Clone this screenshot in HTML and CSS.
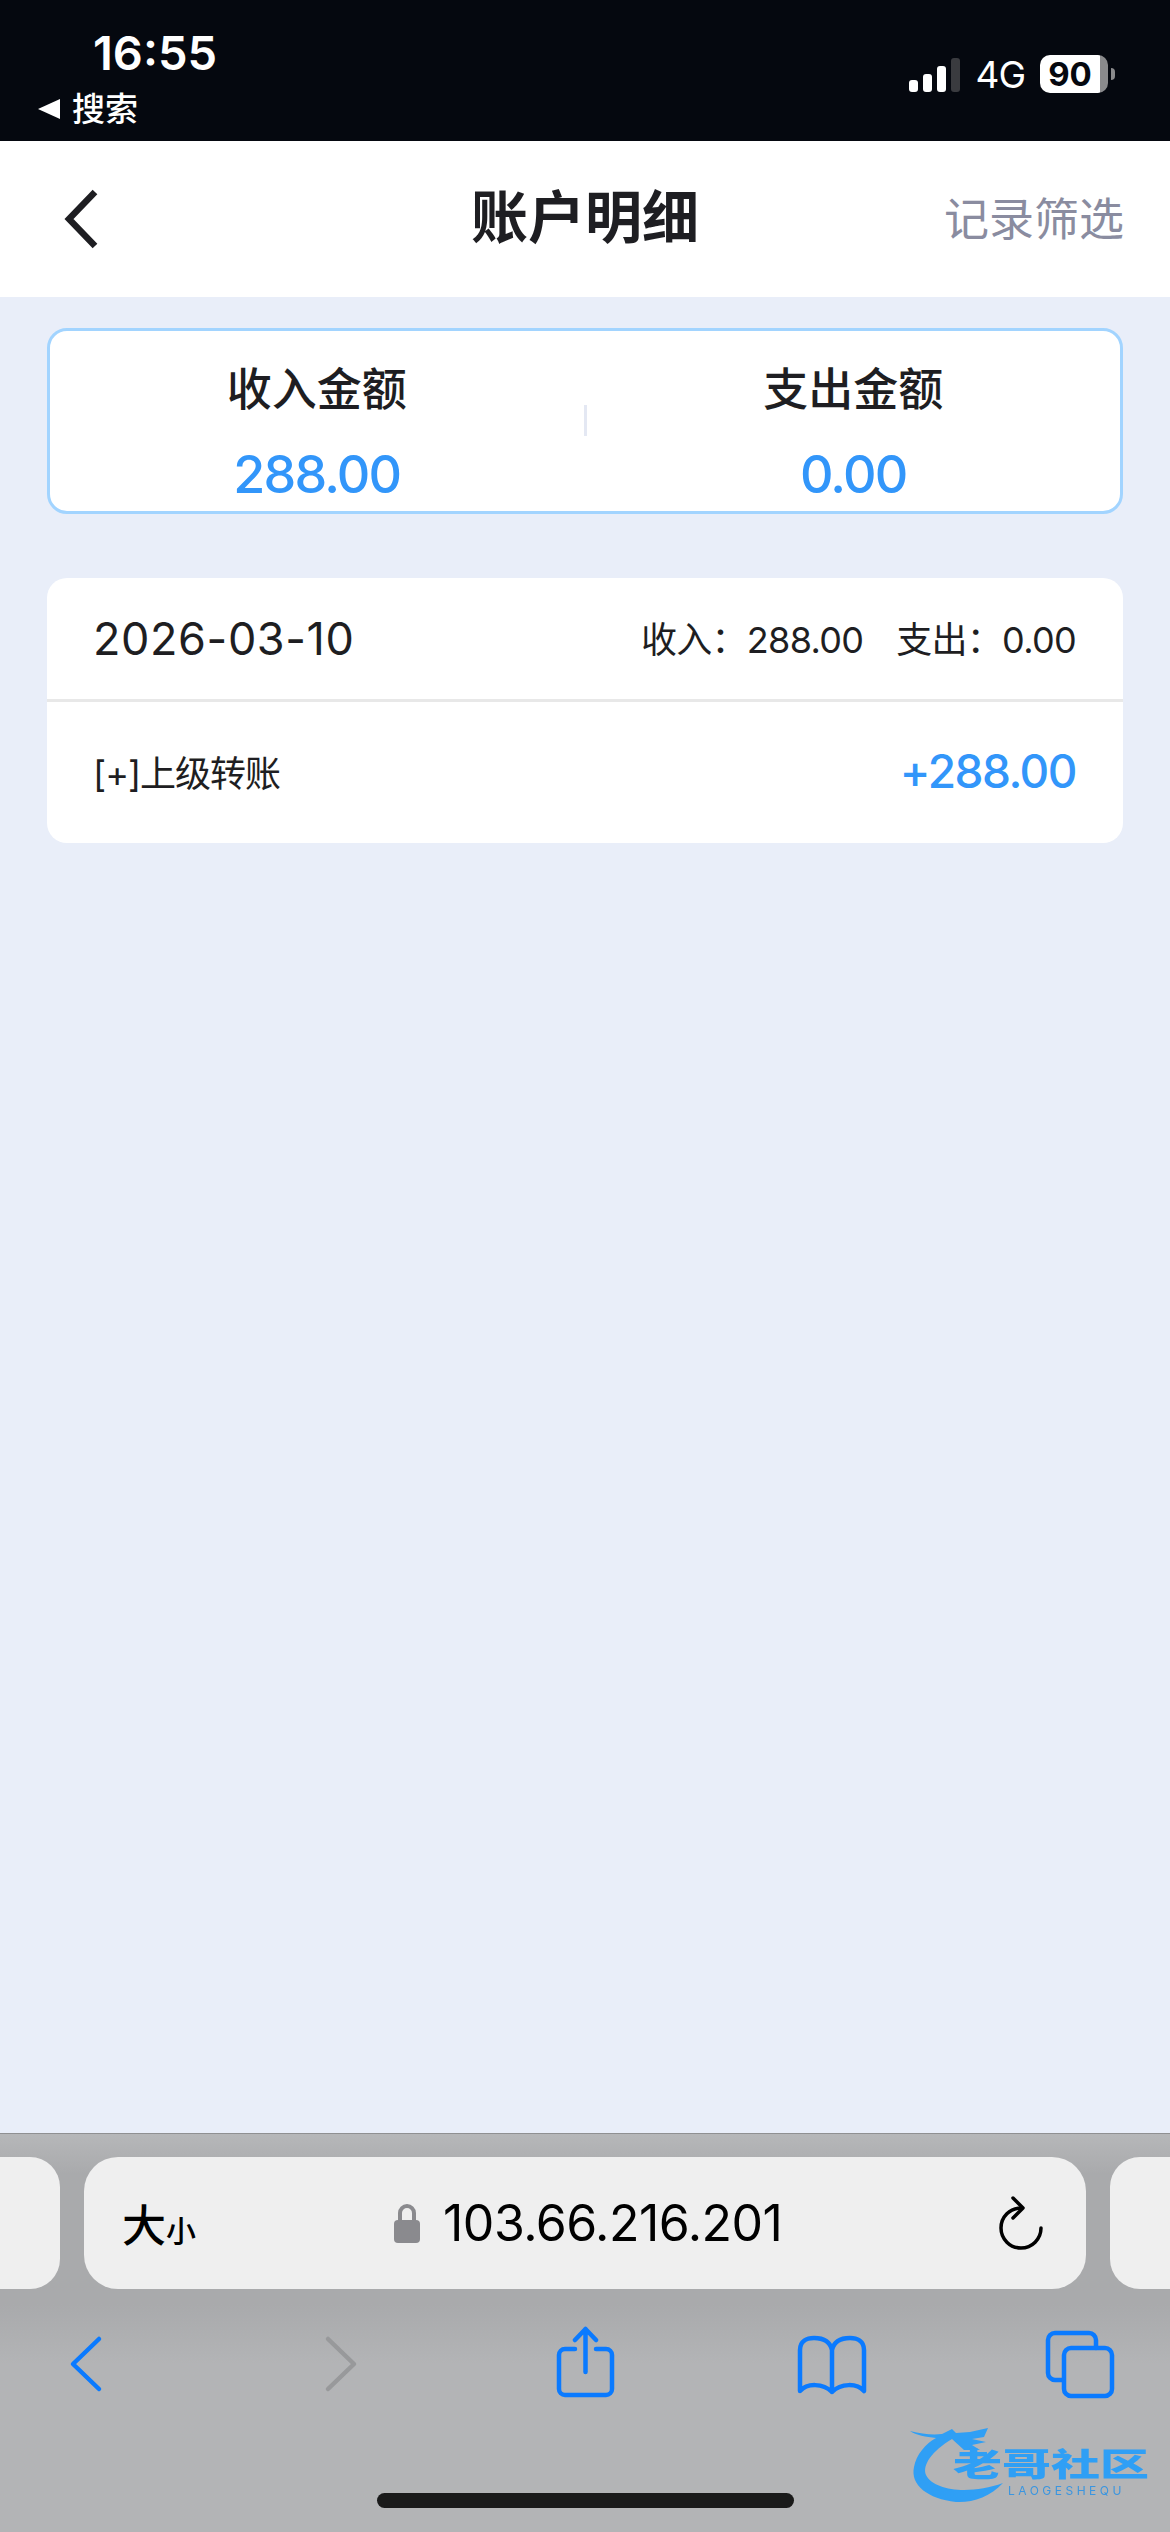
FILE: index.html
```html
<!DOCTYPE html>
<html lang="zh-CN">
<head>
    <meta charset="UTF-8">
    <meta name="viewport" content="width=device-width, initial-scale=1.0">
    <title>账户明细</title>
    <link rel="stylesheet" href="styles.css">
</head>
<body>
    <div class="page">
        <div class="status-bar">
            <div class="status-left">
                <div class="time">16:55</div>
                <div class="back-app"><span class="back-arrow"></span>搜索</div>
            </div>
            <div class="status-right">
                <div class="signal">
                    <span class="bar bar-1"></span>
                    <span class="bar bar-2"></span>
                    <span class="bar bar-3"></span>
                    <span class="bar bar-4"></span>
                </div>
                <div class="network">4G</div>
                <div class="battery">90</div>
                <span class="battery-nub"></span>
            </div>
        </div>

        <div class="nav-bar">
            <svg class="nav-back" width="40" height="64" viewBox="0 0 40 64">
                <polyline points="35,5 9,32 35,59" fill="none" stroke="#1e1e22" stroke-width="6.500"/>
            </svg>
            <h1 class="nav-title">账户明细</h1>
            <a class="nav-filter">记录筛选</a>
        </div>

        <div class="content">
            <div class="summary">
                <div class="summary-col">
                    <div class="summary-label">收入金额</div>
                    <div class="summary-value">288.00</div>
                </div>
                <div class="summary-divider"></div>
                <div class="summary-col">
                    <div class="summary-label">支出金额</div>
                    <div class="summary-value">0.00</div>
                </div>
            </div>

            <div class="record-card">
                <div class="record-head">
                    <div class="record-date">2026-03-10</div>
                    <div class="record-totals">
                        <span>收入：288.00</span>
                        <span>支出：0.00</span>
                    </div>
                </div>
                <div class="record-row">
                    <div class="record-name">[+]上级转账</div>
                    <div class="record-amount">+288.00</div>
                </div>
            </div>
        </div>

        <div class="toolbar">
            <div class="tabs-row">
                <div class="side-pill"></div>
                <div class="url-pill">
                    <div class="text-size"><span class="big">大</span><span class="small">小</span></div>
                    <div class="url">
                        <svg width="28" height="40" viewBox="0 0 28 40">
                            <path d="M7 18V10a7 7 0 0 1 14 0v8" fill="none" stroke="#8a8a8e" stroke-width="4"/>
                            <rect x="1" y="17" width="26" height="23" rx="4" fill="#8a8a8e"/>
                        </svg>
                        <span>103.66.216.201</span>
                    </div>
                    <svg class="reload" width="46" height="54" viewBox="0 0 46 54">
                        <path d="M23 12a20 20 0 1 0 20 20" fill="none" stroke="#000" stroke-width="3.500" stroke-linecap="round"/>
                        <polyline points="15,2 25,12 15,22" fill="none" stroke="#000" stroke-width="3.500" stroke-linecap="round" stroke-linejoin="round"/>
                    </svg>
                </div>
                <div class="side-pill"></div>
            </div>

            <div class="icons-row">
                <svg width="70" height="76" viewBox="0 0 70 76">
                    <polyline points="48,13 22,38 48,63" fill="none" stroke="#0a7aff" stroke-width="4.500" stroke-linecap="round" stroke-linejoin="round"/>
                </svg>
                <svg width="70" height="76" viewBox="0 0 70 76">
                    <polyline points="28,13 54,38 28,63" fill="none" stroke="#98999b" stroke-width="4.500" stroke-linecap="round" stroke-linejoin="round"/>
                </svg>
                <svg width="70" height="76" viewBox="0 0 70 76" fill="none" stroke="#0a7aff" stroke-width="4.500" stroke-linecap="round" stroke-linejoin="round">
                    <path d="M27 23H17a6 6 0 0 0-6 6v34a6 6 0 0 0 6 6h41a6 6 0 0 0 6-6V29a6 6 0 0 0-6-6H48"/>
                    <path d="M37.500 46V3M27 14 37.500 3 48 14"/>
                </svg>
                <svg width="70" height="76" viewBox="0 0 70 76" fill="none" stroke="#0a7aff" stroke-width="4.500" stroke-linecap="round" stroke-linejoin="round">
                    <path d="M35 24C33 15 26 12 17 12C10 12 3 15 3 24V65C10 57 26 57 35 66C44 57 60 57 67 65V24C67 15 60 12 53 12C44 12 37 15 35 24ZM35 24V66"/>
                </svg>
                <svg width="70" height="76" viewBox="0 0 70 76" fill="none" stroke="#0a7aff" stroke-width="4.500" stroke-linecap="round" stroke-linejoin="round">
                    <path d="M17 54H10a7 7 0 0 1-7-7V14a7 7 0 0 1 7-7h34a7 7 0 0 1 7 7v8"/>
                    <rect x="19" y="22" width="48" height="48" rx="7"/>
                </svg>
            </div>

            <div class="home-indicator"></div>

            <div class="watermark">
                <svg class="watermark-dragon" width="100" height="82" viewBox="0 0 100 82">
                    <path d="M0 8C12 11 22 12 32 11L42 6L46 10L60 9L78 5L74 14L62 16L76 19L62 22L70 27L54 27L42 16C22 28 12 42 16 52C24 68 60 72 93 60C80 74 62 80 46 79C18 76 0 62 4 44C6 32 16 20 26 15C16 14 6 12 0 8Z" fill="#2f9ff5"/>
                </svg>
                <div class="watermark-name">老哥社区</div>
                <div class="watermark-sub">LAOGESHEQU</div>
            </div>
        </div>
    </div>
</body>
</html>
```

FILE: styles.css
```css
* {
    box-sizing: border-box;
}
body {
    margin: 0;
    font-family: Inter, "Noto Sans CJK SC", sans-serif;
    color: #1e1e22;
}
.page {
    width: 1170px;
    height: 2532px;
    display: flex;
    flex-direction: column;
    overflow: hidden;
    background-color: #e9eef9;
}

/* status bar */
.status-bar {
    height: 141px;
    flex: none;
    display: flex;
    justify-content: space-between;
    background-color: #05080f;
    color: #fff;
}
.status-left {
    padding-top: 25px;
}
.time {
    padding-left: 93px;
    font-size: 47px;
    font-weight: 600;
    line-height: 56px;
}
.back-app {
    display: flex;
    align-items: center;
    padding-left: 38px;
    margin-top: 7px;
    font-size: 33px;
    line-height: 42px;
    font-weight: 500;
}
.back-arrow {
    width: 0;
    height: 0;
    margin-right: 12px;
    border-top: 10px solid transparent;
    border-bottom: 10px solid transparent;
    border-right: 22px solid #fff;
}
.status-right {
    display: flex;
    align-items: center;
    height: 38px;
    margin-top: 55px;
    padding-right: 55px;
}
.signal {
    display: flex;
    align-items: flex-end;
    gap: 5px;
    height: 34px;
    margin-top: 2px;
}
.bar {
    width: 9px;
    background: #fff;
    border-radius: 3px;
}
.bar-1 { height: 12px; }
.bar-2 { height: 18px; }
.bar-3 { height: 26px; }
.bar-4 { height: 34px; background: #3a3b3f; }
.network {
    margin-left: 15px;
    font-size: 37px;
    letter-spacing: -1px;
}
.battery {
    width: 68px;
    height: 38px;
    margin-left: 15px;
    padding-right: 8px;
    text-align: center;
    border-radius: 10px;
    background: linear-gradient(to right, #fff 60px, #8a8a8c 60px);
    color: #05080f;
    font-size: 33px;
    font-weight: 700;
    line-height: 38px;
}
.battery-nub {
    width: 4px;
    height: 12px;
    margin-left: 3px;
    border-radius: 0 6px 6px 0;
    background: #8a8a8c;
}

/* nav */
.nav-bar {
    height: 156px;
    flex: none;
    display: flex;
    align-items: center;
    justify-content: space-between;
    position: relative;
    padding: 0 46px 6px 60px;
    background: #fff;
}
.nav-title {
    margin: 0 0 6px;
    position: absolute;
    left: 0;
    right: 0;
    text-align: center;
    font-size: 57px;
    font-weight: 700;
    pointer-events: none;
}
.nav-back {
    margin-top: 6px;
}
.nav-filter {
    font-size: 45px;
    color: #8a8ca0;
}

/* content */
.content {
    flex: 1;
    padding: 31px 47px 0;
}
.summary {
    height: 186px;
    display: flex;
    align-items: center;
    background: #fff;
    border: 3px solid #a2d4ff;
    border-radius: 20px;
}
.summary-col {
    flex: 1;
    padding-top: 23px;
    text-align: center;
}
.summary-label {
    font-size: 45px;
    font-weight: 500;
    line-height: 62px;
}
.summary-value {
    margin-top: 23px;
    font-size: 52px;
    font-weight: 500;
    letter-spacing: -1.800px;
    line-height: 62px;
    color: #3296fa;
}
.summary-divider {
    width: 3px;
    height: 31px;
    margin-top: -2px;
    background: #e4e8f3;
}
.record-card {
    margin-top: 64px;
    background: #fff;
    border-radius: 20px;
    overflow: hidden;
}
.record-head,
.record-row {
    display: flex;
    align-items: center;
    justify-content: space-between;
    padding: 0 47px 0 46px;
}
.record-head {
    height: 124px;
    border-bottom: 3px solid #e8e8e8;
}
.record-row {
    height: 141px;
    padding-bottom: 3px;
}
.record-date {
    font-size: 45px;
    letter-spacing: 0.600px;
}
.record-totals {
    display: flex;
    gap: 33px;
    padding-bottom: 4px;
    font-size: 36px;
    letter-spacing: -0.700px;
}
.record-name {
    font-size: 36px;
    letter-spacing: -1px;
}
.record-amount {
    font-size: 46px;
    font-weight: 500;
    letter-spacing: -1.500px;
    color: #3296fa;
}

/* safari toolbar */
.toolbar {
    height: 399px;
    flex: none;
    position: relative;
    border-top: 1px solid #8f9092;
    background: linear-gradient(to bottom, #b6b7b9 0, #a9aaac 40px, #a9aaac 170px, #b3b4b6 230px);
}
.tabs-row {
    display: flex;
    gap: 24px;
    padding-top: 23px;
}
.side-pill {
    width: 60px;
    height: 132px;
    flex: none;
    background: #efefef;
}
.side-pill:first-child {
    border-radius: 0 30px 30px 0;
}
.side-pill:last-child {
    border-radius: 30px 0 0 30px;
}
.url-pill {
    width: 1002px;
    height: 132px;
    flex: none;
    position: relative;
    display: flex;
    align-items: center;
    justify-content: space-between;
    padding: 0 42px 0 38px;
    border-radius: 34px;
    background: #efefef;
}
.text-size {
    display: flex;
    align-items: baseline;
    color: #000;
    font-weight: 500;
}
.big {
    font-size: 44px;
}
.small {
    font-size: 30px;
}
.url {
    position: absolute;
    left: 309px;
    display: flex;
    align-items: center;
    gap: 22px;
    font-size: 50px;
    letter-spacing: -0.500px;
    color: #000;
}
.icons-row {
    display: flex;
    justify-content: space-between;
    padding: 0 55px 0 51px;
    margin-top: 37px;
}
.home-indicator {
    width: 417px;
    height: 15px;
    margin: 91px auto 0;
    border-radius: 8px;
    background: #1a1a1a;
}
.watermark {
    position: absolute;
    left: 910px;
    top: 289px;
    width: 245px;
    height: 82px;
    color: #2f9ff5;
    filter: blur(0.7px);
}
.watermark-dragon {
    position: absolute;
    left: 0;
    top: 0;
}
.watermark-name {
    position: absolute;
    left: 43px;
    top: 24px;
    font-size: 49px;
    font-weight: 900;
    line-height: 36px;
    white-space: nowrap;
    transform: scaleY(0.65);
}
.watermark-sub {
    position: absolute;
    left: 98px;
    top: 61px;
    font-size: 12px;
    letter-spacing: 3.500px;
    line-height: 14px;
    color: #3a95e0;
}
```
